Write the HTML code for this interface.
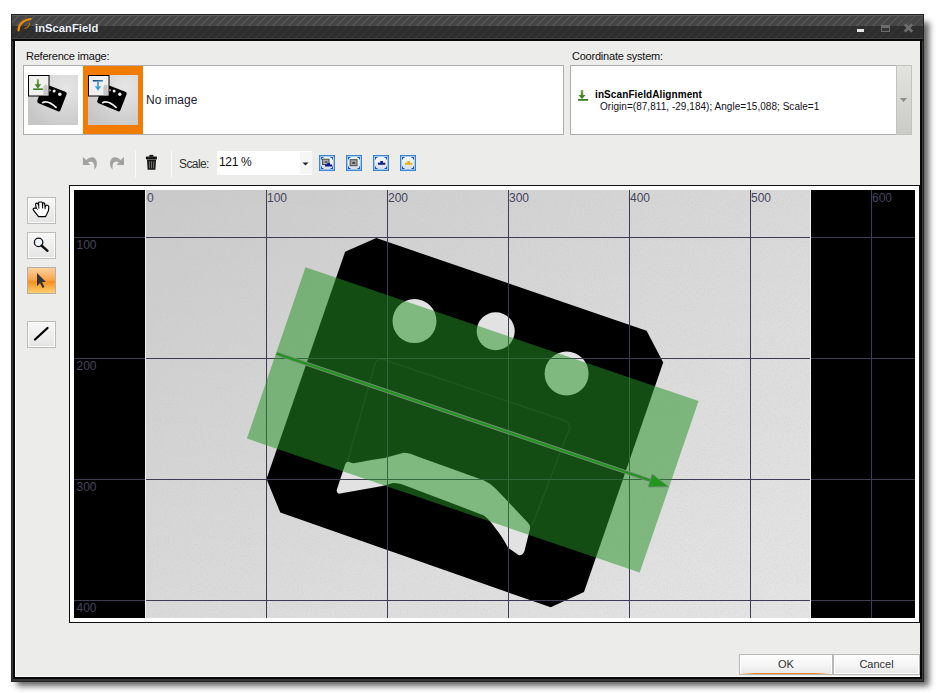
<!DOCTYPE html>
<html><head><meta charset="utf-8">
<style>
*{margin:0;padding:0;box-sizing:border-box}
html,body{width:941px;height:693px;overflow:hidden;background:#fff;font-family:"Liberation Sans",sans-serif}
.a{position:absolute}
.lbl{font-size:11px;letter-spacing:-0.22px;color:#101010;white-space:nowrap}
.box{background:#fff;border:1px solid #acacac}
.tb{width:29px;height:27px;border:1px solid #bcbcb8;background:linear-gradient(#f8f8f8,#e4e4e4);box-shadow:inset 0 0 0 1px #fafafa}
.btn{height:21px;border:1px solid #b8b8b4;background:linear-gradient(#fefefe 0,#f6f6f6 50%,#e6e6e6 100%);font-size:11px;color:#303030;text-align:center;line-height:19px;box-shadow:inset 0 0 0 1px #fff}
.ic{width:16px;height:16px;border:1px solid #3585dc;background:linear-gradient(#f6f8fa,#dce2ea)}
</style></head><body>
<div class="a" style="left:17px;top:22px;width:912px;height:664px;background:rgba(0,0,0,0.62);filter:blur(3px)"></div>
<div class="a" style="left:11px;top:14px;width:913px;height:668px;background:#383838;border:1px solid #222"></div>
<div class="a" style="left:12px;top:15px;width:911px;height:11px;background:repeating-linear-gradient(135deg,#464646 0 4.6px,#565656 4.6px 5.66px)"></div>
<div class="a" style="left:12px;top:15px;width:911px;height:1px;background:#5e5e5e"></div>
<div class="a" style="left:12px;top:26px;width:911px;height:13px;background:repeating-linear-gradient(135deg,#2d2d2d 0 4.6px,#343434 4.6px 5.66px)"></div>
<div class="a" style="left:12px;top:38px;width:911px;height:1px;background:#454545"></div>
<div class="a" style="left:12px;top:39px;width:911px;height:2px;background:#080808"></div>
<div class="a" style="left:13px;top:41px;width:2px;height:638px;background:#080808"></div>
<div class="a" style="left:920px;top:41px;width:2px;height:638px;background:#080808"></div>
<div class="a" style="left:13px;top:677px;width:909px;height:2px;background:#080808"></div>
<!-- logo -->
<svg class="a" style="left:14px;top:16px" width="20" height="18" viewBox="0 0 20 18">
<path d="M4.5 14.5 C4.5 9 9 4 16.5 3" stroke="#f28c00" stroke-width="2.2" fill="none" stroke-linecap="round"/>
<path d="M15.5 7 C15.5 10 13.5 12 10.5 12.5" stroke="#d07800" stroke-width="1.1" fill="none"/>
</svg>
<div class="a" style="left:35px;top:21.5px;font-weight:bold;font-size:11.2px;letter-spacing:0.05px;color:#eaf2ff;white-space:nowrap">inScanField</div>
<!-- window buttons -->
<div class="a" style="left:857px;top:29px;width:7px;height:3px;background:#e6e6e6"></div>
<div class="a" style="left:881px;top:25px;width:9px;height:7px;border:1px solid #6c6c6c;border-top-width:3px;background:#353535"></div>
<svg class="a" style="left:903px;top:23px" width="11" height="10"><path d="M1.8 1.3 L9.2 8.7 M9.2 1.3 L1.8 8.7" stroke="#6c6c6c" stroke-width="2.7"/></svg>

<div class="a" style="left:15px;top:41px;width:905px;height:636px;background:#ececeb;border-left:1px solid #fafafa;border-bottom:1px solid #fafafa"></div>

<div class="a lbl" style="left:26px;top:49.8px">Reference image:</div>
<div class="a box" style="left:23px;top:65px;width:541px;height:70px"></div>
<div class="a" style="left:83px;top:66px;width:60px;height:68px;background:#f27c00"></div>
<svg class="a" style="left:0;top:0" width="160" height="140">
<defs>
<radialGradient id="tg" cx="0.75" cy="0.25" r="0.9"><stop offset="0" stop-color="#e6e6e6"/><stop offset="1" stop-color="#c6c6c6"/></radialGradient>
<linearGradient id="gdl" x1="0" y1="0" x2="0" y2="1"><stop offset="0" stop-color="#78b040"/><stop offset="1" stop-color="#2e7010"/></linearGradient>
<linearGradient id="bul" x1="0" y1="0" x2="1" y2="1"><stop offset="0" stop-color="#103050"/><stop offset="1" stop-color="#50b0e0"/></linearGradient>
<g id="thumb">
<rect x="0" y="0" width="50" height="50" fill="url(#tg)"/>
<path d="M17.3 9.1 L37.3 16.7 Q39.2 17.4 38.6 19.2 L32.4 35.2 Q31.8 37 30 36.3 L10.6 28.3 Q8.8 27.6 9.3 25.8 L14.8 10.2 Q15.4 8.4 17.3 9.1Z" fill="#000"/>
<circle cx="21.3" cy="15.3" r="1.3" fill="#eee"/><circle cx="26.1" cy="16.1" r="1.5" fill="#eee"/><circle cx="31.8" cy="19.3" r="1.7" fill="#eee"/>
<path d="M14.2 28 Q19.5 24.2 28.6 32.8" stroke="#eee" stroke-width="1.7" fill="none"/>
<rect x="0.5" y="0.5" width="20.5" height="20.5" fill="#f0f0f0" stroke="#000" stroke-width="1"/>
<path d="M15.6 20.3 L15.2 12.5 Q16.8 8.3 19.4 10.2 L20.2 20.3Z" fill="#c6c6c6"/>
</g>
</defs>
<use href="#thumb" x="28" y="75"/>
<use href="#thumb" x="88" y="75"/>
<path d="M36.9 79.3h2v5h2.3l-3.3 4.2-3.3-4.2h2.3z" fill="url(#gdl)"/>
<rect x="33.1" y="88.4" width="9.7" height="1.6" fill="#3a8020"/>
<rect x="92.8" y="80" width="10.2" height="1.7" fill="url(#bul)"/>
<rect x="97.2" y="81.5" width="1.6" height="5" fill="#3a90c0"/>
<path d="M94.8 86.2h6.4l-3.2 4.6z" fill="#40a0d0"/>
</svg>
<div class="a" style="left:146px;top:93px;font-size:12px;color:#202030;white-space:nowrap">No image</div>

<div class="a lbl" style="left:572px;top:49.8px">Coordinate system:</div>
<div class="a box" style="left:570px;top:65px;width:342px;height:70px"></div>
<div class="a" style="left:896px;top:65px;width:16px;height:70px;background:linear-gradient(#e2e2de,#cacac6);border:1px solid #c2c2bc"></div>
<svg class="a" style="left:899px;top:97px" width="10" height="6"><path d="M1 1h7l-3.5 4z" fill="#8c8c8c"/></svg>
<svg class="a" style="left:576px;top:88px" width="14" height="14">
<path d="M4.8 2h2.4v5h2.4l-3.6 4-3.6-4h2.4z" fill="url(#gdl)"/>
<rect x="2" y="11" width="10" height="1.8" fill="#3a8020"/>
</svg>
<div class="a" style="left:595px;top:89px;font-weight:bold;font-size:10px;letter-spacing:0.1px;color:#000;white-space:nowrap">inScanFieldAlignment</div>
<div class="a" style="left:600px;top:101px;font-size:10px;letter-spacing:0.04px;color:#101018;white-space:nowrap">Origin=(87,811, -29,184); Angle=15,088; Scale=1</div>

<!-- toolbar -->
<svg class="a" style="left:80px;top:152px" width="85" height="22">
<path id="undo" d="M2.9 5.1 L2.9 12.9 L10.4 12.9 L8 10.6 Q10.5 8.8 12.8 10.2 Q14.9 11.8 14.2 17.8 Q17.6 14.5 16.8 10 Q15.8 5.2 11.8 5.2 Q8.8 5.2 6.3 7.9 Z" fill="#a2a2a2"/>
<use href="#undo" transform="translate(46.9,0) scale(-1,1)"/>
<rect x="69.4" y="2.9" width="4" height="1.8" fill="#111"/>
<rect x="65.9" y="4.6" width="11.1" height="2.9" rx="0.8" fill="#161616"/>
<path d="M67 7.8 H76 L75.4 17.4 Q75.3 17.8 74.8 17.8 H68.2 Q67.7 17.8 67.6 17.4 Z" fill="#161616"/>
<path d="M69.4 9.3V16.3M71.5 9.3V16.3M73.6 9.3V16.3" stroke="#7a7a7a" stroke-width="0.9"/>
</svg>
<div class="a" style="left:135px;top:150px;width:1px;height:28px;background:#fafafa"></div>
<div class="a" style="left:171px;top:150px;width:1px;height:28px;background:#fafafa"></div>
<div class="a" style="left:179px;top:156.5px;font-size:12px;color:#303030;letter-spacing:-0.6px;white-space:nowrap">Scale:</div>
<div class="a" style="left:217px;top:151px;width:95px;height:24px;background:#fff"></div>
<div class="a" style="left:300px;top:152px;width:12px;height:22px;background:#f6f6f6"></div>
<svg class="a" style="left:302px;top:162px" width="8" height="5"><path d="M0.5 0.5h6l-3 3z" fill="#222"/></svg>
<div class="a" style="left:219px;top:155px;font-size:12px;color:#101010;letter-spacing:-0.35px;white-space:nowrap">121 %</div>

<svg class="a" style="left:318px;top:154px" width="110" height="18">
<defs>
<linearGradient id="icg" x1="0" y1="0" x2="0" y2="1"><stop offset="0" stop-color="#f8fafc"/><stop offset="1" stop-color="#d8dde4"/></linearGradient>
<g id="icf">
<rect x="1" y="1" width="16" height="16" fill="#2f6cc0"/>
<rect x="1.6" y="1.6" width="14.8" height="14.8" fill="#58a8f0"/>
<rect x="2.5" y="2.5" width="13" height="13" fill="url(#icg)"/>
<path d="M3 3h2.5v1h-1.5v1.5h-1z M15 3h-2.5v1h1.5v1.5h1z M3 15h2.5v-1h-1.5v-1.5h-1z M15 15h-2.5v-1h1.5v-1.5h1z" fill="#1d56c8"/>
</g></defs>
<use href="#icf" x="0" y="0"/><use href="#icf" x="27" y="0"/><use href="#icf" x="54" y="0"/><use href="#icf" x="81" y="0"/>
<rect x="4.4" y="5.2" width="6.6" height="5.4" fill="#a8a8a8" stroke="#4a4a4a" stroke-width="1"/>
<path d="M6.5 8.5h3v-1h-3z" fill="#333"/>
<path d="M9.2 8.9h2.8v1.5h2.2v2h-7.2v-2h2.2z" fill="#0c1c88"/>
<rect x="32.2" y="5.7" width="6.8" height="6" fill="#a8a8a8" stroke="#4a4a4a" stroke-width="1"/>
<path d="M34.2 9.8h3v-1.2h-0.8v-0.8h-1.4v0.8h-0.8z" fill="#333"/>
<path d="M62.3 7h2.6v1.8h2.4v2h-7.4v-2h2.4z" fill="#0c1c88"/>
<path d="M89.3 7h2.6v1.8h2.4v2h-7.4v-2h2.4z" fill="#e6b21a"/>
</svg>

<!-- left tools -->
<div class="a tb" style="left:27px;top:197px"></div>
<div class="a tb" style="left:27px;top:232px"></div>
<div class="a tb" style="left:27px;top:267px;border-color:#b4b0a4;background:linear-gradient(#fcd0a0 0,#f8a850 45%,#f49020 55%,#fcd070 100%);box-shadow:none"></div>
<div class="a tb" style="left:27px;top:321px"></div>
<svg class="a" style="left:27px;top:197px" width="30" height="160">
<path d="M11.5 19.6 L6.2 12.9 Q5.9 11.2 7.6 11.1 L9.3 11.3 L8.6 7.6 Q8.4 6.1 9.7 6.1 L10.6 6.3 L11.7 8.6 L11.6 5.6 Q11.9 5 12.6 5 L14.6 5 Q15.2 5 15.3 5.8 L15.6 8.8 L15.8 6.3 Q16 5.9 16.7 5.9 L17.6 6.3 L18.1 9.8 L19.6 8 Q21.2 8 21.8 9.6 L21.5 13.4 L20.1 16.6 L18.6 19.6 Z" fill="#fff" stroke="#000" stroke-width="1.15" stroke-linejoin="round"/>
<path d="M11.7 8.6 L11.9 11.6 M15.6 8.8 L15.6 11.4 M18.1 9.8 L18.1 12.2 M9.3 11.3 L10.8 12.6" stroke="#000" stroke-width="1" fill="none"/>
<circle cx="11.6" cy="45.4" r="4.2" fill="#f4f8ff" stroke="#111" stroke-width="1.3"/>
<path d="M14.5 48.5 L20.5 53.8" stroke="#111" stroke-width="2.4" stroke-linecap="round"/>
<path d="M10 76 L10 89 L13 86 L15.5 91 L17.5 90 L15 85 L19 85 Z" fill="#333"/>
<path d="M8 142.5 L20.5 131" stroke="#000" stroke-width="2.3" stroke-linecap="round"/>
</svg>

<!-- canvas -->
<div class="a" style="left:69px;top:185px;width:851px;height:438px;border:1px solid #101010;background:#fff"></div>
<svg class="a" style="left:0;top:0" width="941" height="693">
<defs>
<linearGradient id="bg" x1="0" y1="0" x2="1" y2="0">
<stop offset="0" stop-color="#cacaca"/><stop offset="1" stop-color="#d9d9d9"/>
</linearGradient>
<filter id="noise" x="0" y="0" width="100%" height="100%"><feTurbulence type="fractalNoise" baseFrequency="0.7" numOctaves="2" seed="3"/><feColorMatrix type="matrix" values="0 0 0 0 0.5  0 0 0 0 0.5  0 0 0 0 0.5  1.2 0 0 0 -0.6"/></filter>
<filter id="soft" x="-5%" y="-5%" width="110%" height="110%"><feGaussianBlur stdDeviation="0.55"/></filter>
<linearGradient id="bgv" x1="0" y1="0" x2="0" y2="1">
<stop offset="0" stop-color="#fff" stop-opacity="0"/><stop offset="1" stop-color="#fff" stop-opacity="0.3"/>
</linearGradient>
</defs>
<rect x="74" y="190" width="841" height="428" fill="#000"/>
<rect x="146" y="190" width="664" height="428" fill="url(#bg)"/>
<rect x="146" y="190" width="664" height="428" fill="url(#bgv)"/>
<rect x="146" y="190" width="664" height="428" filter="url(#noise)" opacity="0.6"/>
<!-- object -->
<g filter="url(#soft)">
<polygon points="376.3,238 646.6,330.8 663.2,362.6 584,592.1 550.7,607.3 280.3,512.6 266.5,478.9 345.1,251.8" fill="#000"/>
<circle cx="414.5" cy="321.1" r="22" fill="#e2e2e2"/>
<circle cx="495.7" cy="331.2" r="19" fill="#e2e2e2"/>
<circle cx="566.6" cy="373.5" r="22" fill="#e2e2e2"/>
<path d="M374.5,365.2 Q376.5,358 383.5,359.5 L563,420 Q571,423 569.3,429 L532.4,524.7 M347.3,462.1 L374.5,365.2" stroke="#181818" stroke-width="1.5" fill="none"/>
<path d="M338.8,493.7 Q335.8,492.5 337,489 L345.3,464 Q347,460.5 350.5,462.5 Q352,463.5 354,463.3 Q370,460 384.5,458.1 L403.7,452.8 Q410,453 417.5,456.5 L483.6,480.3 Q490,483 496,489 L527.7,522.4 Q531,525.5 529.8,529.5 L524.5,551 Q522,556.5 518.5,555 L508.1,547.8 Q502,536 495.4,528.2 Q490,520 483.9,515.4 L405.8,485.7 Q399,482.5 393,483 L382.4,485.9 Z" fill="#e2e2e2"/>
</g>
<!-- grid -->
<g stroke="#3e3c52" stroke-width="1">
<path d="M74 237.5H810M811 237.5H915M74 358.5H810M811 358.5H915M74 479.5H810M811 479.5H915M74 600.5H810M811 600.5H915"/>
<path d="M266.5 190V618M387.5 190V618M508.5 190V618M629.5 190V618M750.5 190V618M871.5 190V618"/>
</g>
<rect x="145" y="190" width="1" height="428" fill="#f0f0f0"/>
<rect x="810" y="190" width="1" height="428" fill="#f0f0f0"/>
<g font-family="Liberation Sans" font-size="12" fill="#46445e">
<text x="147" y="201.8">0</text><text x="267" y="201.8">100</text><text x="388" y="201.8">200</text><text x="509" y="201.8">300</text><text x="630" y="201.8">400</text><text x="751" y="201.8">500</text><text x="872" y="201.8">600</text>
<text x="76.5" y="248.5">100</text><text x="76.5" y="369.5">200</text><text x="76.5" y="490.5">300</text><text x="76.5" y="611.5">400</text>
</g>
<!-- green overlay -->
<polygon points="305.5,267.2 698.6,401 639.7,572.6 246.9,438.5" fill="rgba(36,147,36,0.52)"/>
<!-- arrow -->
<line x1="276.5" y1="353.7" x2="655" y2="482" stroke="#7c8a7c" stroke-width="3.9"/>
<line x1="276.5" y1="353.7" x2="655" y2="482" stroke="#20961f" stroke-width="2.3"/>
<polygon points="668.8,486.8 652.2,474 648.1,487.1" fill="#20961f" stroke="#7a8a7a" stroke-width="0.8"/>
</svg>

<!-- buttons -->
<div class="a btn" style="left:739px;top:654px;width:94px">OK</div>
<div class="a" style="left:741px;top:673px;width:89px;height:1px;background:linear-gradient(90deg,rgba(240,138,48,0.2),#f08a30 15%,#f08a30 85%,rgba(240,138,48,0.2))"></div>
<div class="a btn" style="left:833px;top:654px;width:87px">Cancel</div>
</body></html>
